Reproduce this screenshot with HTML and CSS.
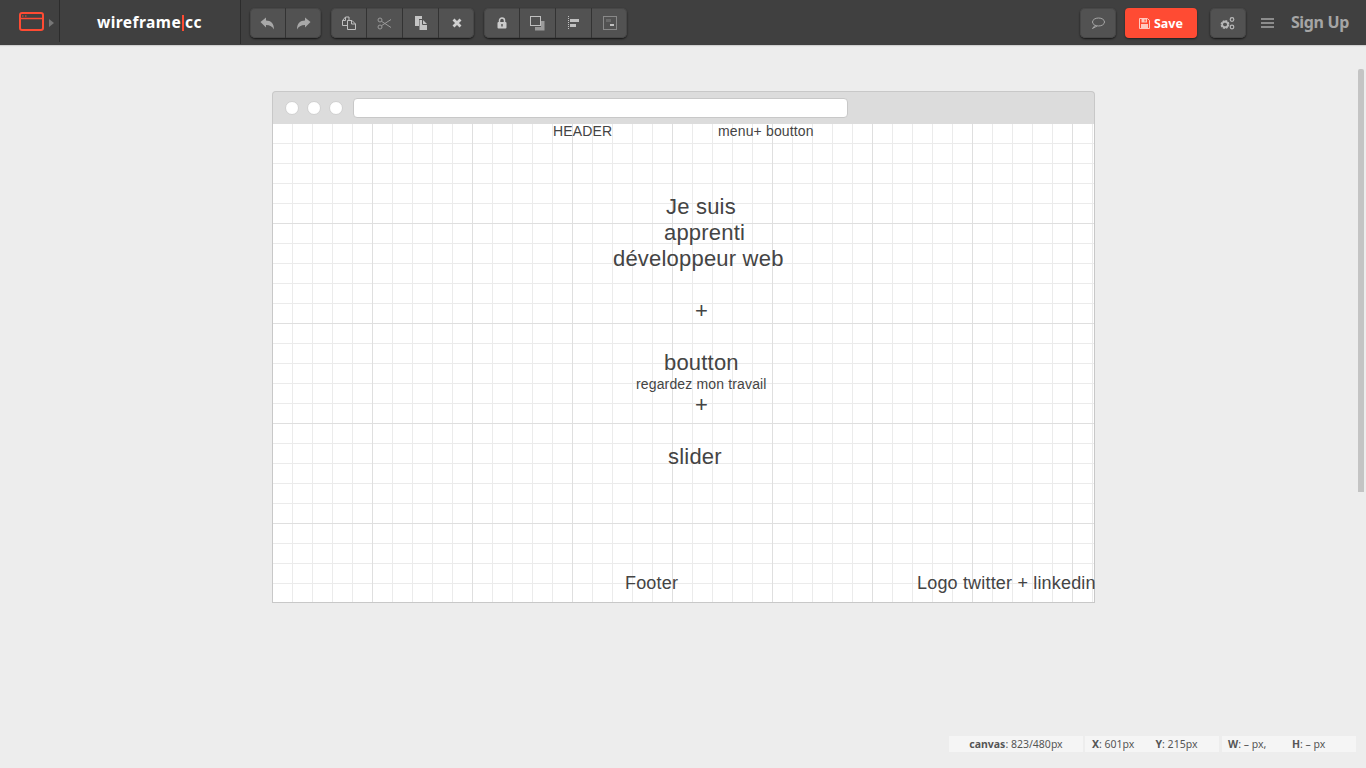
FILE: index.html
```html
<!DOCTYPE html>
<html lang="en">
<head>
<meta charset="utf-8">
<title>wireframe.cc</title>
<link rel="stylesheet" href="styles.css">
</head>
<body>
<header class="toolbar">
  <div class="menu-section">
    <svg class="logo-icon" width="25" height="19" viewBox="0 0 25 19"><rect x="1" y="1" width="23" height="17" rx="2" fill="none" stroke="#ff4b33" stroke-width="2"/><path d="M1 6.500h23" stroke="#ff4b33" stroke-width="1.500"/><path d="M3 4h1.500M6 4h1.500" stroke="#ff4b33"/></svg>
    <svg class="caret" width="5" height="8" viewBox="0 0 5 8"><path d="M0 0l5 4-5 4z" fill="#777"/></svg>
  </div>
  <div class="brand">wireframe<span class="brand-bar"></span>cc</div>
  <div class="group first-group">
    <button class="btn"><svg width="15" height="13" viewBox="0 0 15 13"><path d="M0.500 5L6 0.500V3.500C11 3.500 14 6.500 14 12.500 12.500 9.500 10 8 6 8V10.500z" fill="#a8a8a8"/></svg></button>
    <button class="btn"><svg width="15" height="13" viewBox="0 0 15 13"><path d="M14.500 5L9 0.500V3.500C4 3.500 1 6.500 1 12.500 2.500 9.500 5 8 9 8V10.500z" fill="#a8a8a8"/></svg></button>
  </div>
  <div class="group">
    <button class="btn"><svg width="14" height="14" viewBox="0 0 14 14" fill="none" stroke="#c0c0c0"><path d="M5.500 9.500h-5v-5l3-3.500h3.500v3.500"/><path d="M3.500 1v3.500h-3"/><path d="M5.500 4.500h4.500l3.500 3.500v5.500h-8z"/><path d="M9.500 4.500v3.500h4"/></svg></button>
    <button class="btn"><svg width="15" height="13" viewBox="0 0 15 13" fill="none" stroke="#9a9a9a"><circle cx="3" cy="3" r="2"/><circle cx="3" cy="10" r="2"/><path d="M4.500 4.300L14 10.500M4.500 8.700L14 2.500"/></svg></button>
    <button class="btn"><svg width="14" height="14" viewBox="0 0 14 14"><path d="M1 0h7v3H5v7H1z" fill="#c4c4c4"/><path d="M5.500 4h3.500l4 4v6h-7.500z" fill="#c4c4c4"/><path d="M8.500 4v4.500h4.500" stroke="#525252" fill="none"/></svg></button>
    <button class="btn"><svg width="10" height="10" viewBox="0 0 10 10"><path d="M1.500 1.500l7 7M8.500 1.500l-7 7" stroke="#d0d0d0" stroke-width="2.800"/></svg></button>
  </div>
  <div class="group">
    <button class="btn"><svg width="10" height="12" viewBox="0 0 10 12"><path d="M2.500 5V3.500a2.500 2.500 0 0 1 5 0V5" fill="none" stroke="#ccc" stroke-width="1.500"/><rect x="0.500" y="5" width="9" height="6.500" rx="1" fill="#ccc"/><rect x="4.300" y="7" width="1.400" height="2.500" fill="#525252"/></svg></button>
    <button class="btn"><svg width="15" height="15" viewBox="0 0 15 15"><path d="M5 14.500h9.500V5H11v6H5z" fill="#9a9a9a"/><rect x=".5" y=".5" width="10" height="9" fill="none" stroke="#c0c0c0"/></svg></button>
    <button class="btn"><svg width="11" height="14" viewBox="0 0 11 14"><path d="M.5 0v14" stroke="#c0c0c0" stroke-dasharray="1 1"/><rect x="2" y="3" width="9" height="3" fill="#c0c0c0"/><rect x="2" y="8" width="6" height="3" fill="#c0c0c0"/></svg></button>
    <button class="btn"><svg width="14" height="14" viewBox="0 0 14 14"><rect x=".5" y=".5" width="13" height="13" fill="none" stroke="#c0c0c0" stroke-dasharray="1 1"/><rect x="3" y="3" width="5" height="3" fill="#6a6a6a"/><rect x="7" y="8" width="4" height="2" fill="#c0c0c0"/></svg></button>
  </div>
  <div class="right">
    <div class="group solo"><button class="btn"><svg width="14" height="12" viewBox="0 0 14 12" fill="none" stroke="#a8a8a8"><ellipse cx="7.500" cy="5" rx="6" ry="4"/><path d="M4 8.500L1.500 11.500 6 9"/></svg></button></div>
    <button class="save"><svg width="11" height="11" viewBox="0 0 11 11"><path d="M.5.5h8l2 2v8h-10z" fill="none" stroke="#ffc9bf"/><path d="M2.500 1h5.500v3.500h-5.500z" fill="#ffc9bf"/><rect x="5.500" y="1.500" width="1.200" height="2" fill="#ff4b33"/><rect x="2" y="6" width="7" height="4" fill="#ffc9bf"/></svg><span>Save</span></button>
    <div class="group solo gear"><button class="btn"><svg width="15" height="13" viewBox="0 0 15 13"><circle cx="5" cy="7.500" r="3.200" fill="none" stroke="#b8b8b8" stroke-width="2.400" stroke-dasharray="1.800 .7"/><circle cx="5" cy="7.500" r="2.800" fill="none" stroke="#b8b8b8" stroke-width="1.400"/><circle cx="12" cy="2.500" r="1.800" fill="none" stroke="#b8b8b8" stroke-width="1.200"/><circle cx="12" cy="10" r="1.800" fill="none" stroke="#b8b8b8" stroke-width="1.200"/></svg></button></div>
    <svg class="hamburger" width="13" height="10" viewBox="0 0 13 10"><path d="M0 1h13M0 5h13M0 9h13" stroke="#a5a5a5" stroke-width="1.500"/></svg>
    <a class="signup">Sign Up</a>
  </div>
</header>
<main class="stage">
  <div class="window">
    <div class="chrome">
      <span class="dot"></span><span class="dot"></span><span class="dot"></span>
      <span class="address"></span>
    </div>
    <div class="canvas">
      <div class="node n-header">HEADER</div>
      <div class="node n-menu">menu+ boutton</div>
      <div class="node big n-je">Je suis</div>
      <div class="node big n-apprenti">apprenti</div>
      <div class="node big n-dev">développeur web</div>
      <div class="node big n-plus1">+</div>
      <div class="node big n-boutton">boutton</div>
      <div class="node n-regardez">regardez mon travail</div>
      <div class="node big n-plus2">+</div>
      <div class="node big n-slider">slider</div>
      <div class="node mid n-footer">Footer</div>
      <div class="node mid n-logo">Logo twitter + linkedin</div>
    </div>
  </div>
</main>
<footer class="status">
  <div class="cell c1"><b>canvas</b>: 823/480px</div>
  <div class="cell c2"><span class="pair"><b>X</b>: 601px</span><span class="pair"><b>Y</b>: 215px</span></div>
  <div class="cell c3"><span class="pair"><b>W</b>: – px,</span><span class="pair"><b>H</b>: – px</span></div>
</footer>
<div class="scrollbar"></div>
</body>
</html>
```
FILE: styles.css
```css
* { box-sizing: border-box; }
html, body { margin: 0; height: 100%; }
body {
  width: 1366px; height: 768px; overflow: hidden; position: relative;
  display: flex; flex-direction: column;
  background: #ededed;
  font-family: "Noto Sans", sans-serif;
}
.toolbar {
  height: 45px; flex: none; display: flex; align-items: stretch;
  background: #404040;
  box-shadow: 0 1px 1px rgba(0,0,0,.12);
}
.menu-section {
  width: 60px; height: 42px; display: flex; align-items: flex-start;
  padding: 12px 0 0 19px; gap: 5px; border-right: 1px solid #2c2c2c;
}
.logo-icon { display: block; }
.caret { margin-top: 7px; }
.brand {
  width: 181px; height: 44px; border-right: 1px solid #2c2c2c;
  display: flex; align-items: center; justify-content: center;
  color: #fff; font-size: 15.500px; font-weight: 700; letter-spacing: .45px;
  padding-right: 1px;
}
.brand-bar { width: 2px; height: 16px; background: #ff4b33; margin: 2px 1px 0 1px; }
.group {
  display: flex; height: 30px; margin: 8px 0 0 10px;
  border-radius: 5px; background: #525252;
  box-shadow: inset 0 0 0 1px #474747, 0 1px 2px rgba(0,0,0,.7);
}
.first-group { margin-left: 9px; }
.btn {
  width: 36px; height: 30px; padding: 0; border: 0; background: none;
  display: flex; align-items: center; justify-content: center;
  border-left: 1px solid #333;
}
.btn:first-child { border-left: 0; width: 35px; }
.right { margin-left: auto; display: flex; align-items: flex-start; }
.solo { margin-left: 0; }
.solo .btn { width: 36px; }
.save {
  width: 72px; height: 30px; margin: 8px 0 0 9px; padding: 0; border: 0;
  border-radius: 4px; background: #ff4b33;
  box-shadow: 0 1px 2px rgba(0,0,0,.5);
  color: #fff; font: 700 12.500px "Noto Sans", sans-serif;
  display: flex; align-items: center; justify-content: center; gap: 4px;
}
.gear { margin-left: 13px; }
.hamburger { margin: 18px 0 0 15px; }
.signup {
  margin: 11px 17px 0 17px; color: #a5a5a5;
  font-size: 16px; font-weight: 700; line-height: 22px; letter-spacing: -.34px;
}
.stage { flex: 1; padding: 46px 0 0 272px; }
.window { width: 823px; }
.chrome {
  height: 33px; display: flex; align-items: center; padding: 0 0 0 12px; gap: 8px;
  background: #dcdcdc; border: 1px solid #c8c8c8; border-bottom: 0; border-radius: 4px 4px 0 0;
}
.dot { width: 14px; height: 14px; border-radius: 50%; background: #fff; border: 1px solid #d0d0d0; }
.address {
  width: 495px; height: 20px; margin-left: 2px;
  background: #fff; border: 1px solid #c8c8c8; border-radius: 4px;
}
.canvas {
  position: relative; width: 823px; height: 479px; overflow: visible;
  border: solid #c8c8c8; border-width: 0 1px 1px 1px;
  background-color: #fff;
  background-image:
    linear-gradient(to right, transparent 99px, #dfdfdf 99px),
    linear-gradient(to bottom, transparent 99px, #dfdfdf 99px),
    linear-gradient(to right, transparent 19px, #ebebeb 19px),
    linear-gradient(to bottom, transparent 19px, #ebebeb 19px);
  background-size: 100px 100px, 100px 100px, 20px 20px, 20px 20px;
  background-position: 0 0;
}
.node {
  position: absolute; white-space: nowrap; color: #444;
  font: 14px/16px "Liberation Sans", Arial, sans-serif;
  letter-spacing: .15px;
}
.big { font-size: 22px; line-height: 26px; letter-spacing: .2px; }
.mid { font-size: 18px; line-height: 22px; letter-spacing: .18px; }
.n-header { left: 280px; top: -1px; }
.n-menu { left: 445px; top: -1px; }
.n-je { left: 393px; top: 70px; }
.n-apprenti { left: 391px; top: 96px; }
.n-dev { left: 340px; top: 122px; }
.n-plus1 { left: 422px; top: 174px; }
.n-boutton { left: 391px; top: 226px; }
.n-regardez { left: 363px; top: 252px; }
.n-plus2 { left: 422px; top: 268px; }
.n-slider { left: 395px; top: 320px; }
.n-footer { left: 352px; top: 448px; }
.n-logo { left: 644px; top: 448px; }
.status {
  position: absolute; left: 949px; top: 736px;
  display: flex; gap: 2px;
  font-family: "Noto Sans", sans-serif; font-size: 10.500px; color: #555;
}
.cell { height: 16px; background: #f5f5f5; line-height: 16px; display: flex; align-items: center; white-space: nowrap; }
.cell b { font-weight: 700; }
.c1 { width: 134px; justify-content: center; }
.c2 { width: 134px; padding-left: 7px; }
.c3 { width: 134px; margin-left: 1px; padding-left: 6px; }
.pair { width: 66px; }
.scrollbar {
  position: absolute; left: 1358px; top: 69px; width: 6px; height: 423px;
  background: #c4c4c4; border-radius: 2px 2px 0 0;
}
```
